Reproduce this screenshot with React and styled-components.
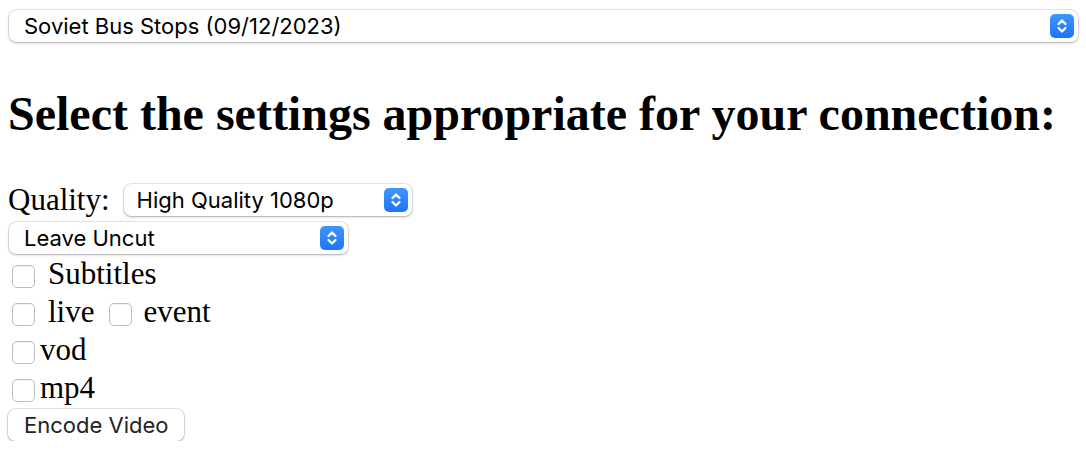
import React from 'react';
import styled, { createGlobalStyle } from 'styled-components';

const GlobalStyle = createGlobalStyle`
    body {
        margin: 0;
        background: #fff;
        font-family: "Liberation Serif", "Times New Roman", serif;
        color: #000;
    }
`

const Page = styled.div`
    padding: 10px 8px 0 8px;
`

const SelectBox = styled.div`
    box-sizing: border-box;
    display: flex;
    align-items: center;
    justify-content: space-between;
    width: ${props => props.$width || '100%'};
    height: 32px;
    margin-left: ${props => props.$ml || 0}px;
    padding: 0 4px 0 ${props => props.$pl || 15}px;
    background: #fff;
    border-radius: 7px;
    box-shadow: 0 0 0 0.5px rgba(0, 0, 0, 0.18), 0 1px 2.5px rgba(0, 0, 0, 0.26);
    font-family: Inter, "Liberation Sans", sans-serif;
    font-size: 22px;
    color: #000;
`

const Arrow = styled.span`
    display: flex;
    align-items: center;
    justify-content: center;
    width: 24px;
    height: 24px;
    border-radius: 5px;
    background: linear-gradient(#3f97fb, #1d74f5);
`

const Heading = styled.h1`
    margin: 44px 0 42px 0;
    font-size: 48px;
    line-height: 56px;
    font-weight: bold;
    white-space: nowrap;
`

const Row = styled.div`
    display: flex;
    align-items: center;
    height: ${props => props.$h || 38}px;
    margin-top: ${props => props.$mt || 0}px;
    font-size: 31px;
`

const Check = styled.span`
    box-sizing: border-box;
    flex: none;
    width: 23px;
    height: 23px;
    margin: 0 5px 0 4px;
    background: #fff;
    border: 1px solid #bcbcbc;
    border-radius: 5px;
    box-shadow: inset 0 1px 1px rgba(0, 0, 0, 0.05);
`

const Label = styled.span`
    padding-bottom: 4px;
    margin-left: ${props => props.$ml || 0}px;
    margin-right: ${props => props.$mr || 0}px;
`

const Button = styled.div`
    box-sizing: border-box;
    display: inline-flex;
    align-items: center;
    width: 176px;
    height: 32px;
    padding-left: 16px;
    background: #fff;
    border-radius: 7px;
    box-shadow: 0 0 0 0.5px rgba(0, 0, 0, 0.2), 0 1px 2.5px rgba(0, 0, 0, 0.26);
    font-family: Inter, "Liberation Sans", sans-serif;
    font-size: 22px;
    color: #222;
`

const Chevrons = () => (
    <svg width="24" height="24" viewBox="0 0 24 24" fill="none" stroke="#fff" strokeWidth="2.2" strokeLinecap="round" strokeLinejoin="round">
        <polyline points="8.5,10 12,6.5 15.5,10" />
        <polyline points="8.5,14 12,17.5 15.5,14" />
    </svg>
)

const Select = ({ children, ...props }) =>
    <SelectBox {...props}>
        <span>{children}</span>
        <Arrow><Chevrons /></Arrow>
    </SelectBox>

const App = () => {
    return (
        <Page>
            <GlobalStyle />
            <Select $width="1069px" $ml={1}>Soviet Bus Stops (09/12/2023)</Select>
            <Heading>Select the settings appropriate for your connection:</Heading>
            <Row $h={32}>
                <span>Quality:</span>
                <Select $width="288px" $ml={14} $pl={13}>High Quality 1080p</Select>
            </Row>
            <Row $h={32} $mt={6}>
                <Select $width="339px" $ml={1}>Leave Uncut</Select>
            </Row>
            <Row $mt={3}>
                <Check />
                <Label $ml={8}>Subtitles</Label>
            </Row>
            <Row>
                <Check />
                <Label $ml={8} $mr={10}>live</Label>
                <Check />
                <Label $ml={7}>event</Label>
            </Row>
            <Row>
                <Check />
                <Label>vod</Label>
            </Row>
            <Row>
                <Check />
                <Label>mp4</Label>
            </Row>
            <Button>Encode Video</Button>
        </Page>
    );
}

export default App;
